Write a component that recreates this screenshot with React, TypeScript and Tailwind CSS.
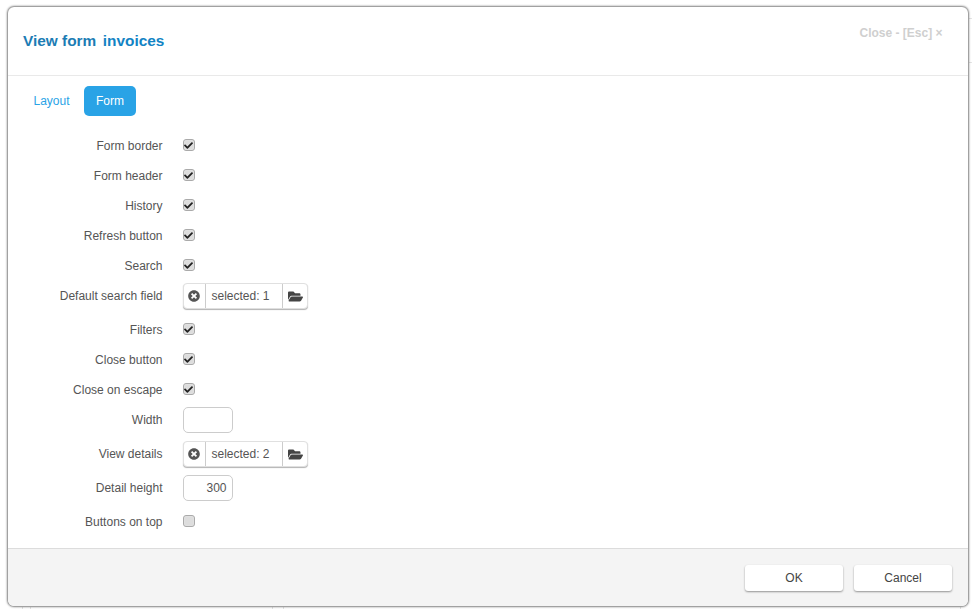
import React from "react";
import { FaFolderOpen, FaTimesCircle, FaCheck } from "react-icons/fa";

function Label({ children, className }: { children: React.ReactNode; className?: string }) {
  return <div className={"w-[154.5px] shrink-0 text-right text-[12px] text-[#555] " + (className ?? "")}>{children}</div>;
}

function Check({ label, checked = true }: { label: string; checked?: boolean }) {
  return (
    <div className="flex h-[30px] items-center">
      <Label className="pt-[2px]">{label}</Label>
      <div className="ml-[20px] flex h-[12px] w-[12px] items-center justify-center rounded-[3px] border border-[#aaaaaa] bg-[#dddddd] shadow-[inset_0_0_1px_rgba(255,255,255,0.9)]">
        {checked && <FaCheck className="text-[9px] text-[#222]" />}
      </div>
    </div>
  );
}

function Selector({ label, value }: { label: string; value: string }) {
  return (
    <div className="flex h-[34px] items-center pb-[2px]">
      <Label>{label}</Label>
      <div className="ml-[20px] flex h-[26px] w-[125px] items-stretch rounded-[4px] border border-[#e0e0e0] bg-white text-[12px] text-[#555] shadow-[0_1px_1px_rgba(0,0,0,0.3)]">
        <div className="flex w-[22px] items-center justify-center border-r border-[#ccc]">
          <FaTimesCircle className="text-[12px] text-[#555]" />
        </div>
        <div className="flex flex-1 items-center pl-[6px]">{value}</div>
        <div className="flex w-[25px] items-center justify-center border-l border-[#ccc] pl-[1px]">
          <FaFolderOpen className="text-[15px] text-[#444]" />
        </div>
      </div>
    </div>
  );
}

function NumberField({ label, value }: { label: string; value?: string }) {
  return (
    <div className="flex h-[34px] items-center pb-[2px]">
      <Label>{label}</Label>
      <div className="ml-[20px] flex h-[26px] w-[50px] items-center justify-end rounded-[5px] border border-[#ccc] bg-white pr-[5px] text-[12px] text-[#555]">
        {value}
      </div>
    </div>
  );
}

function BackdropLine({ className }: { className: string }) {
  return <div className={"absolute bg-[#e4e4e4] " + className} />;
}

export default function App() {
  return (
    <div className="relative h-[609px] w-[972px] overflow-hidden bg-white pl-[8px] pt-[7px] font-['Liberation_Sans',Arial,sans-serif]">
      <BackdropLine className="left-[969px] top-[18px] h-px w-[3px]" />
      <BackdropLine className="left-[969px] top-[62px] h-px w-[3px]" />
      <BackdropLine className="left-[22px] top-[607px] h-[2px] w-px" />
      <BackdropLine className="left-[30px] top-[607px] h-[2px] w-px" />
      <BackdropLine className="left-[272px] top-[607px] h-[2px] w-px" />
      <BackdropLine className="left-[283px] top-[607px] h-[2px] w-px" />
      <BackdropLine className="left-[960px] top-[607px] h-[2px] w-px" />
      <div className="relative flex h-[599px] w-[960px] flex-col overflow-hidden rounded-[6px] bg-white shadow-[0_0_2px_1px_rgba(0,0,0,0.5)]">
        <div className="flex h-[69px] shrink-0 justify-between border-b border-[#e9e9e9] pl-[15px] pr-[25.5px]">
          <div className="mt-[25px] flex text-[15.4px] font-bold leading-[18px] text-[#1c7cb4]">
            <span>View form</span>
            <span className="ml-[6.5px] text-[#1283c4]">invoices</span>
          </div>
          <div className="mt-[19px] text-[12px] font-bold leading-[14px] text-[#cfcfcf]">Close - [Esc] ×</div>
        </div>
        <div className="flex-1">
          <div className="mt-[10px] flex h-[30px] items-center text-[12px]">
            <div className="pl-[25.5px] pr-[14.5px] text-[#2aa3e6]">Layout</div>
            <div className="flex h-[30px] items-center rounded-[5px] bg-[#29a3e6] px-[12px] text-white">Form</div>
          </div>
          <div className="mt-[14px] flex flex-col">
            <Check label="Form border" />
            <Check label="Form header" />
            <Check label="History" />
            <Check label="Refresh button" />
            <Check label="Search" />
            <Selector label="Default search field" value="selected: 1" />
            <Check label="Filters" />
            <Check label="Close button" />
            <Check label="Close on escape" />
            <NumberField label="Width" />
            <Selector label="View details" value="selected: 2" />
            <NumberField label="Detail height" value="300" />
            <Check label="Buttons on top" checked={false} />
          </div>
        </div>
        <div className="flex h-[58px] shrink-0 items-center justify-end gap-[11px] border-t border-[#dcdcdc] bg-[#f4f4f4] pr-[16px]">
          <div className="flex h-[26px] w-[98px] items-center justify-center rounded-[3px] bg-white text-[12px] text-[#444] shadow-[0_1px_2px_rgba(0,0,0,0.4)]">OK</div>
          <div className="flex h-[26px] w-[98px] items-center justify-center rounded-[3px] bg-white text-[12px] text-[#444] shadow-[0_1px_2px_rgba(0,0,0,0.4)]">Cancel</div>
        </div>
      </div>
    </div>
  );
}
